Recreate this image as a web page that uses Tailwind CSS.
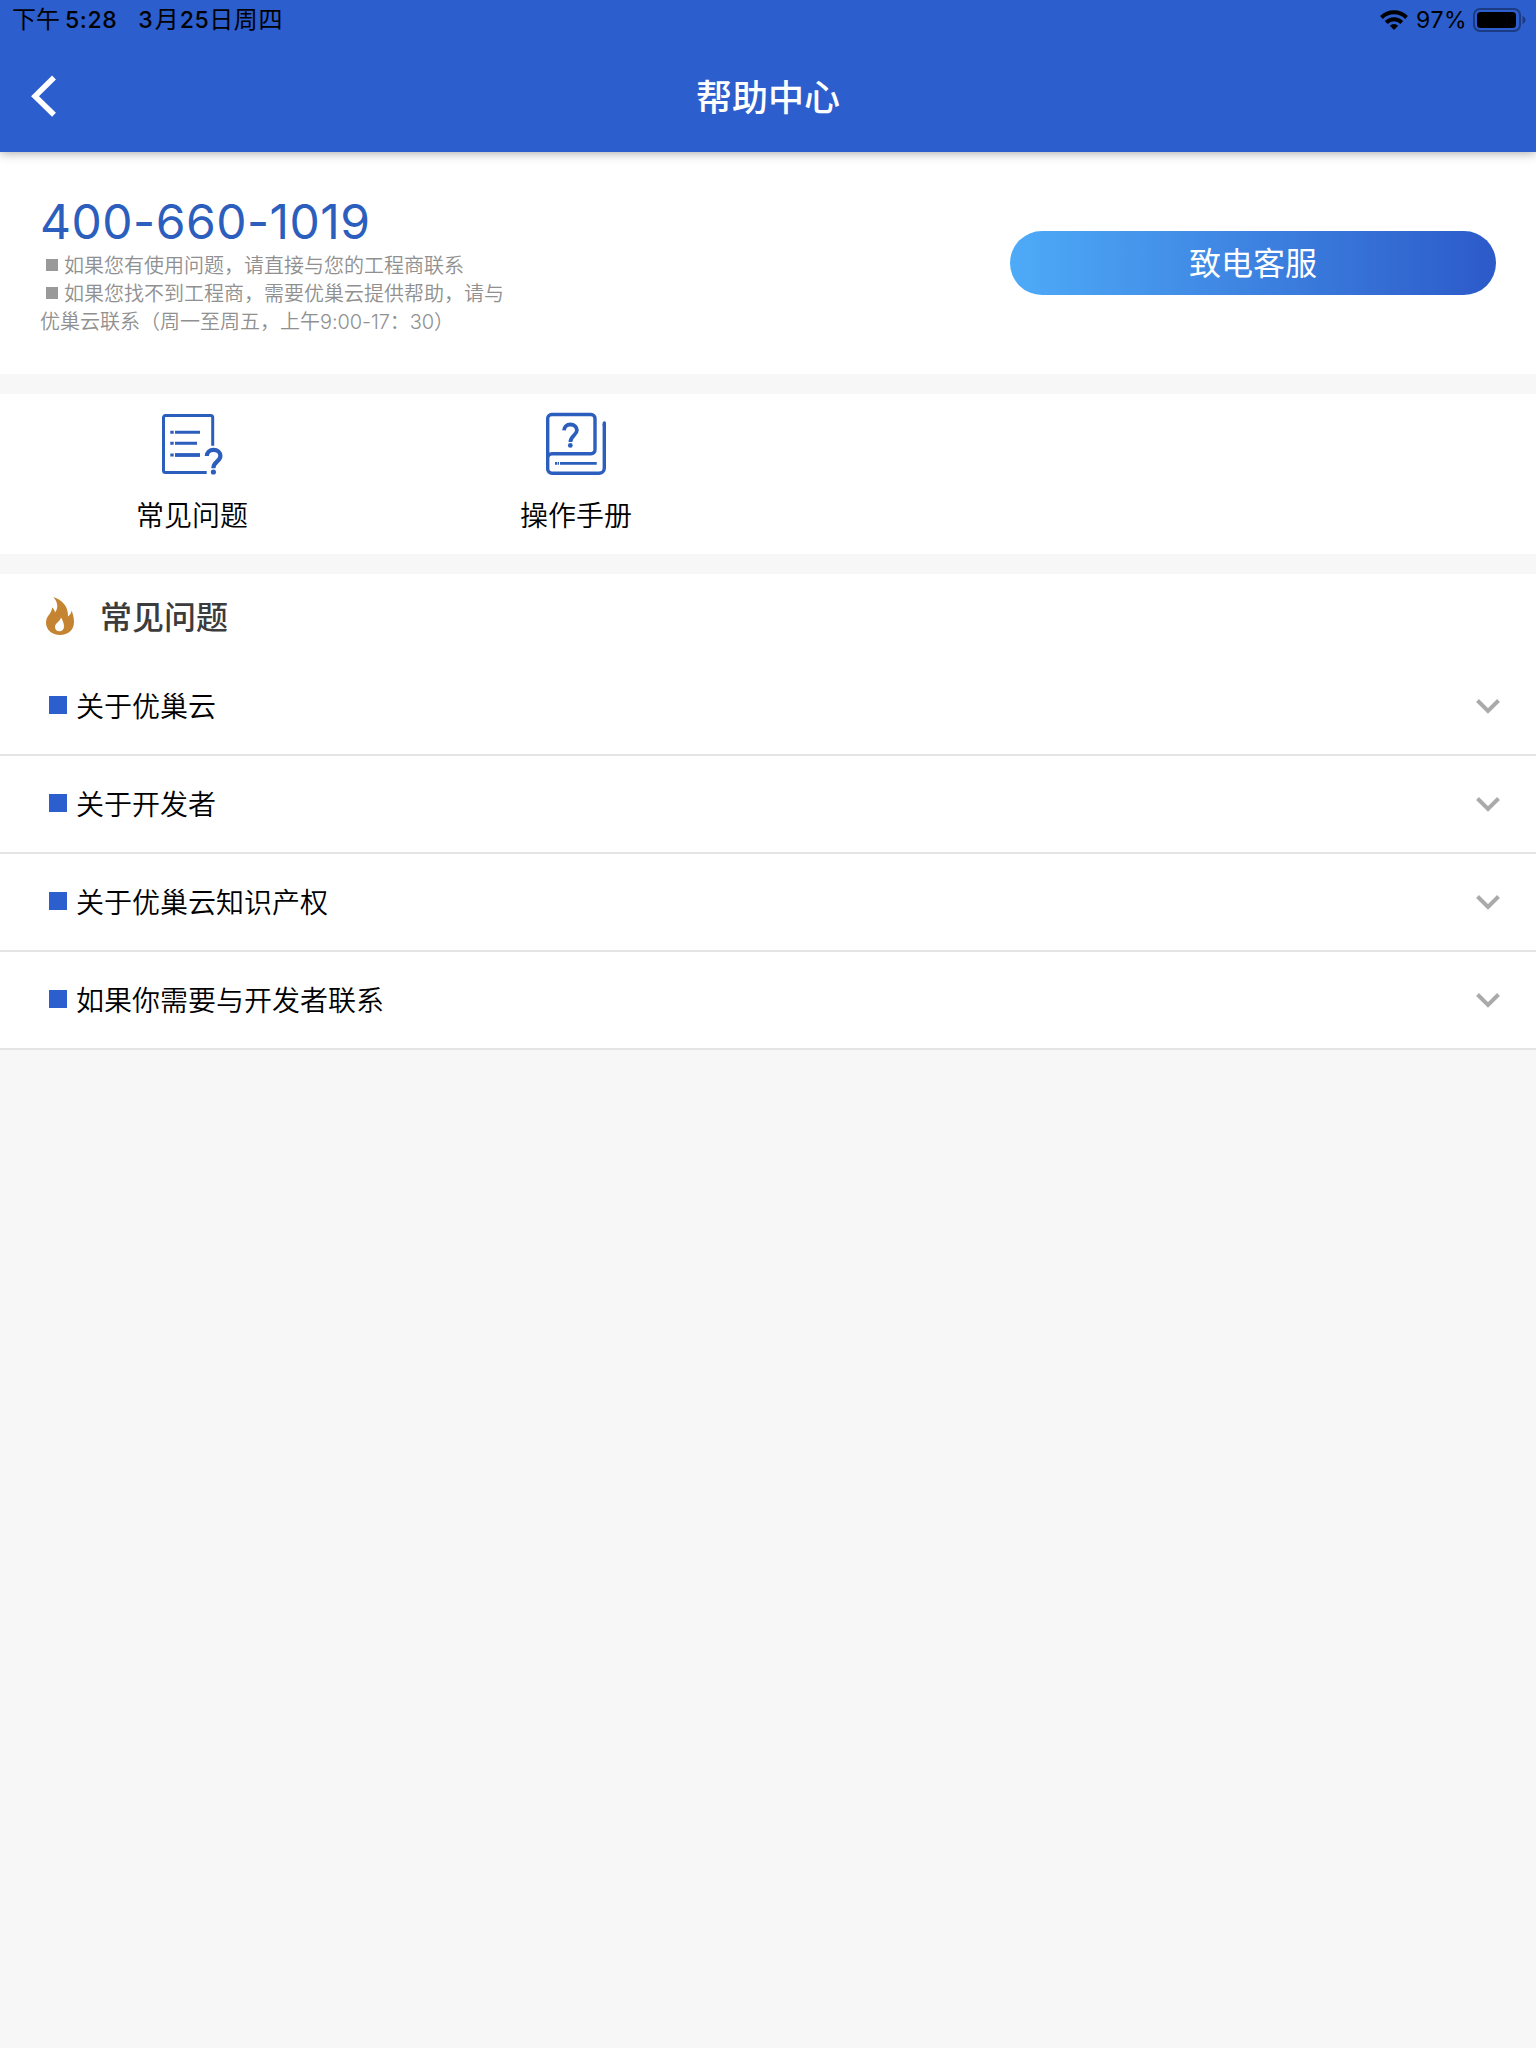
<!DOCTYPE html>
<html lang="zh-CN">
  <head>
    <meta charset="UTF-8" />
    <meta name="viewport" content="width=device-width, initial-scale=1.0" />
    <title>帮助中心</title>
    <script src="https://cdn.jsdelivr.net/npm/@tailwindcss/browser@4"></script>
  </head>
  <body class="bg-[#f7f7f7] min-h-screen font-[Inter,'Noto_Sans_CJK_SC',sans-serif] text-black">
    <!-- ===== Header ===== -->
    <header class="relative h-[152px] bg-[#2c5ecd] shadow-[0_1px_10px_rgba(0,0,0,0.35)]">
      <!-- Status bar -->
      <div class="flex h-10 items-center justify-between pl-3 pr-[10px] text-[23px] leading-10">
        <div class="flex">
          <span class="text-[24px]">下午</span>
          <span class="ml-[5px] tracking-[0.6px] font-medium">5:28</span>
          <span class="ml-[21px] flex"><span class="font-medium">3</span><span class="ml-[2px] text-[24px]">月</span><span class="ml-[1px] tracking-[0.6px] font-medium">25</span><span class="text-[24px] tracking-[0.6px]">日周四</span></span>
        </div>
        <div class="flex items-center">
          <svg class="w-7 h-5" viewBox="0 0 28 20" fill="none" stroke="#000" stroke-width="4">
            <path d="M1.500 7.500a17.700 17.700 0 0 1 25 0" />
            <path d="M6.200 12.500a11 11 0 0 1 15.600 0" />
            <path d="M14 20l-4.200-4.300a6 6 0 0 1 8.400 0z" fill="#000" stroke="none" />
          </svg>
          <span class="ml-[8px] tracking-[0.5px]">97%</span>
          <svg class="ml-[6px] w-[53px] h-6" viewBox="0 0 53 24">
            <rect x="1" y="1" width="46" height="22" rx="6" fill="none" stroke="#1b3b83" stroke-width="2" />
            <rect x="4" y="4" width="39" height="16" rx="3.5" />
            <path d="M49.500 8c4 1.500 4 6.500 0 8z" fill="#1b3b83" />
          </svg>
        </div>
      </div>
      <!-- Title bar -->
      <div class="grid h-28 grid-cols-[1fr_auto_1fr] items-center">
        <svg class="ml-[30px] w-7 h-11" viewBox="0 0 28 44" fill="none" stroke="#fff" stroke-width="5.500">
          <path d="M24 3.500L5 22.200l19 18.500" />
        </svg>
        <h1 class="pt-[3px] text-[36px] leading-[48px] font-medium text-white">帮助中心</h1>
      </div>
    </header>

    <!-- ===== Hotline ===== -->
    <section class="flex h-[222px] items-start justify-between bg-white pl-10 pr-10">
      <div class="pt-[42px] text-[20px] leading-7 font-[350] text-[#909090]">
        <p class="mb-[2px] text-[48px] leading-[56px] font-normal tracking-[0.5px] text-[#2c5ebe]">400-660-1019</p>
        <p class="flex items-center pl-[6px]"><i class="mr-[6px] size-3 bg-[#999] mb-[2px]"></i>如果您有使用问题，请直接与您的工程商联系</p>
        <p class="flex items-center pl-[6px]"><i class="mr-[6px] size-3 bg-[#999] mb-[2px]"></i>如果您找不到工程商，需要优巢云提供帮助，请与</p>
        <p>优巢云联系（周一至周五，上午<span class="tracking-[-0.1px]">9:00-17</span>：<span class="tracking-[-0.1px]">30</span>）</p>
      </div>
      <button class="mt-[79px] h-16 w-[486px] rounded-full bg-linear-to-r/srgb from-[#4eabf8] to-[#2c5ac9] pt-[2px] text-[32px] leading-[62px] text-white">致电客服</button>
    </section>

    <!-- ===== Shortcuts ===== -->
    <section class="mt-5 grid h-40 grid-cols-4 bg-white pt-[18px]">
      <a class="flex flex-col items-center">
        <svg class="size-16" viewBox="0 0 64 64" fill="none" stroke="#2c5ebe" stroke-width="3">
          <path d="M52.700 33.700V5.500a2 2 0 0 0-2-2H5.500a2 2 0 0 0-2 2v53a2 2 0 0 0 2 2h41.200" />
          <path d="M15 20.300h25M15 31.300h22" />
          <path d="M15 43h25" stroke-width="3.800" />
          <path d="M10.300 20.300h3.400M10.300 31.300h3.400M10.300 43h3.400" />
          <path d="M46.800 44c.2-3.800 3-6.200 6.700-6.200 4 0 6.900 2.700 6.900 6.200 0 5.500-7 5.500-7 12.300" stroke-width="4.200" />
          <circle cx="53.400" cy="60" r="2.600" fill="#2c5ebe" stroke="none" />
        </svg>
        <span class="mt-5 text-[28px] leading-10 font-[350]">常见问题</span>
      </a>
      <a class="flex flex-col items-center">
        <svg class="size-16" viewBox="0 0 64 64" fill="none" stroke="#2c5ebe" stroke-width="3.400">
          <path d="M3.700 46V6.500a4 4 0 0 1 4-4H47a4 4 0 0 1 4 4v31a4 4 0 0 1-4 4.300H8a4.300 4.300 0 0 0-4.300 4.200v11a4.300 4.300 0 0 0 4.300 4.300h47a5.300 5.300 0 0 0 5.300-5.300V12" />
          <path d="M60.300 13v-2" stroke-linecap="round" />
          <path d="M16 51.300h36.700M11 51.300h2.400M14 51.300h1" stroke-width="2.800" />
          <path d="M20 18.300c.2-3.600 2.700-5.800 6.300-5.800 3.900 0 6.600 2.500 6.600 5.800 0 5-6.500 5.300-6.500 11.700" stroke-width="3.800" />
          <circle cx="26.300" cy="33.400" r="2.400" fill="#2c5ebe" stroke="none" />
        </svg>
        <span class="mt-5 text-[28px] leading-10 font-[350]">操作手册</span>
      </a>
    </section>

    <!-- ===== FAQ ===== -->
    <section class="mt-5 bg-white">
      <div class="flex h-[84px] items-center pl-[46px]">
        <svg class="w-7 h-[38px]" viewBox="0 0 28 38" fill="#c48432">
          <path fill-rule="evenodd" d="M7.300 0C16 2.500 22.500 9.500 22 19.500c2-1.500 3.300-3.500 3.600-6C27 17 28 21 28 25c0 8-6 13-14 13S0 33 0 25.500C0 19 5.500 17 6.200 10.500c1.500 1.200 2.500 2.900 2.800 5C12.500 11 12 5 7.300 0zM15 20.500c-.5 3.800-6 5.500-6 9.500 0 2.800 2 4.300 4.500 4.300s4.500-1.600 4.500-4.800c0-3.300-1.500-6.500-3-9z" />
        </svg>
        <h2 class="ml-[26px] pt-[3px] text-[32px] leading-10 font-medium text-[#3c3c3c]">常见问题</h2>
      </div>
      <ul class="text-[28px] leading-10 font-[350]">
        <li class="flex h-[98px] items-center border-b-2 border-[#e4e4e4] pl-[49px] pr-9">
          <i class="mr-[9px] mb-[2px] size-[18px] bg-[#2c5ecd]"></i>
          <span class="pt-[2px]">关于优巢云</span>
          <svg class="ml-auto w-6 h-4" viewBox="0 0 24 16" fill="none" stroke="#aaa" stroke-width="4"><path d="M1.500 2.500L12 13 22.500 2.500" /></svg>
        </li>
        <li class="flex h-[98px] items-center border-b-2 border-[#e4e4e4] pl-[49px] pr-9">
          <i class="mr-[9px] mb-[2px] size-[18px] bg-[#2c5ecd]"></i>
          <span class="pt-[2px]">关于开发者</span>
          <svg class="ml-auto w-6 h-4" viewBox="0 0 24 16" fill="none" stroke="#aaa" stroke-width="4"><path d="M1.500 2.500L12 13 22.500 2.500" /></svg>
        </li>
        <li class="flex h-[98px] items-center border-b-2 border-[#e4e4e4] pl-[49px] pr-9">
          <i class="mr-[9px] mb-[2px] size-[18px] bg-[#2c5ecd]"></i>
          <span class="pt-[2px]">关于优巢云知识产权</span>
          <svg class="ml-auto w-6 h-4" viewBox="0 0 24 16" fill="none" stroke="#aaa" stroke-width="4"><path d="M1.500 2.500L12 13 22.500 2.500" /></svg>
        </li>
        <li class="flex h-[98px] items-center border-b-2 border-[#e4e4e4] pl-[49px] pr-9">
          <i class="mr-[9px] mb-[2px] size-[18px] bg-[#2c5ecd]"></i>
          <span class="pt-[2px]">如果你需要与开发者联系</span>
          <svg class="ml-auto w-6 h-4" viewBox="0 0 24 16" fill="none" stroke="#aaa" stroke-width="4"><path d="M1.500 2.500L12 13 22.500 2.500" /></svg>
        </li>
      </ul>
    </section>
  </body>
</html>
